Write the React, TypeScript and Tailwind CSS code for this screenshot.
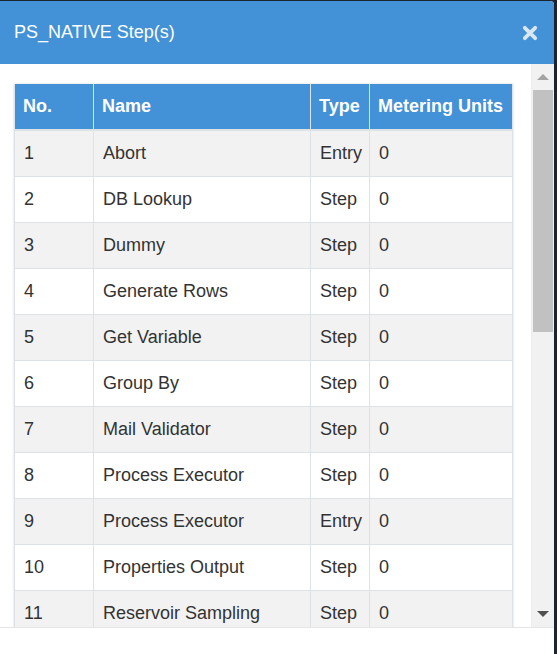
const steps = [
  { no: 1, name: "Abort", type: "Entry", units: 0 },
  { no: 2, name: "DB Lookup", type: "Step", units: 0 },
  { no: 3, name: "Dummy", type: "Step", units: 0 },
  { no: 4, name: "Generate Rows", type: "Step", units: 0 },
  { no: 5, name: "Get Variable", type: "Step", units: 0 },
  { no: 6, name: "Group By", type: "Step", units: 0 },
  { no: 7, name: "Mail Validator", type: "Step", units: 0 },
  { no: 8, name: "Process Executor", type: "Step", units: 0 },
  { no: 9, name: "Process Executor", type: "Entry", units: 0 },
  { no: 10, name: "Properties Output", type: "Step", units: 0 },
  { no: 11, name: "Reservoir Sampling", type: "Step", units: 0 },
];

const th = "border-x border-[#dde2e6] px-[8px] text-left font-bold text-white";
const td = "border border-[#dde2e6] pl-[9px] pr-[7px] text-[#333]";

const App = () => {
  return (
    <div className="h-[654px] w-[557px] overflow-hidden bg-[#1c2430] pt-[1px] font-['Liberation_Sans',Arial,sans-serif]">
      <div className="flex h-[653px] w-[554px] flex-col overflow-hidden rounded-tr-[4px] bg-white">
        {/* Header */}
        <div className="flex h-[63px] shrink-0 items-center justify-between bg-[#4391d6] pl-[14px] pr-[16px]">
          <h4 className="text-[18px] text-white">PS_NATIVE Step(s)</h4>
          <svg width="16" height="16" viewBox="0 0 16 16" className="text-[#d9e7f5]">
            <path d="M2.8 2.8 L13.2 13.2 M13.2 2.8 L2.8 13.2" stroke="currentColor" strokeWidth="3.8" strokeLinecap="round" />
          </svg>
        </div>

        {/* Body */}
        <div className="flex h-[563px] shrink-0">
          <div className="min-h-0 flex-1 overflow-hidden pl-[14px] pr-[19px] pt-[20px]">
            <table className="w-[498px] table-fixed border-collapse text-[18px] shadow-[0_0_2px_rgba(0,0,0,0.18)]">
              <colgroup>
                <col className="w-[79px]" />
                <col className="w-[217px]" />
                <col className="w-[59px]" />
                <col className="w-[143px]" />
              </colgroup>
              <thead>
                <tr className="h-[46px] border-b-2 border-[#dde2e6] bg-[#4391d6]">
                  <th className={th}>No.</th>
                  <th className={th}>Name</th>
                  <th className={th}>Type</th>
                  <th className={`${th} whitespace-nowrap px-[7px]`}>Metering Units</th>
                </tr>
              </thead>
              <tbody>
                {steps.map((s, i) => (
                  <tr key={s.no} className={`h-[46px] ${i % 2 === 0 ? "bg-[#f2f2f2]" : "bg-white"}`}>
                    <td className={td}>{s.no}</td>
                    <td className={`${td} whitespace-nowrap`}>{s.name}</td>
                    <td className={td}>{s.type}</td>
                    <td className={td}>{s.units}</td>
                  </tr>
                ))}
              </tbody>
            </table>
          </div>

          {/* Scrollbar */}
          <div className="flex w-[23px] shrink-0 flex-col items-center border-l border-[#ececec] bg-[#f1f1f1]">
            <div className="flex h-[26px] w-full items-center justify-center">
              <div className="h-0 w-0 border-x-[6px] border-b-[6px] border-x-transparent border-b-[#a3a3a3]" />
            </div>
            <div className="h-[242px] w-[20px] bg-[#c1c1c1]" />
            <div className="flex-1" />
            <div className="flex h-[26px] w-full items-center justify-center">
              <div className="h-0 w-0 border-x-[6px] border-t-[6px] border-x-transparent border-t-[#505050]" />
            </div>
          </div>
        </div>

        {/* Footer */}
        <div className="flex-1 border-t border-[#e5e5e5] bg-white" />
      </div>
    </div>
  );
};

export default App;
